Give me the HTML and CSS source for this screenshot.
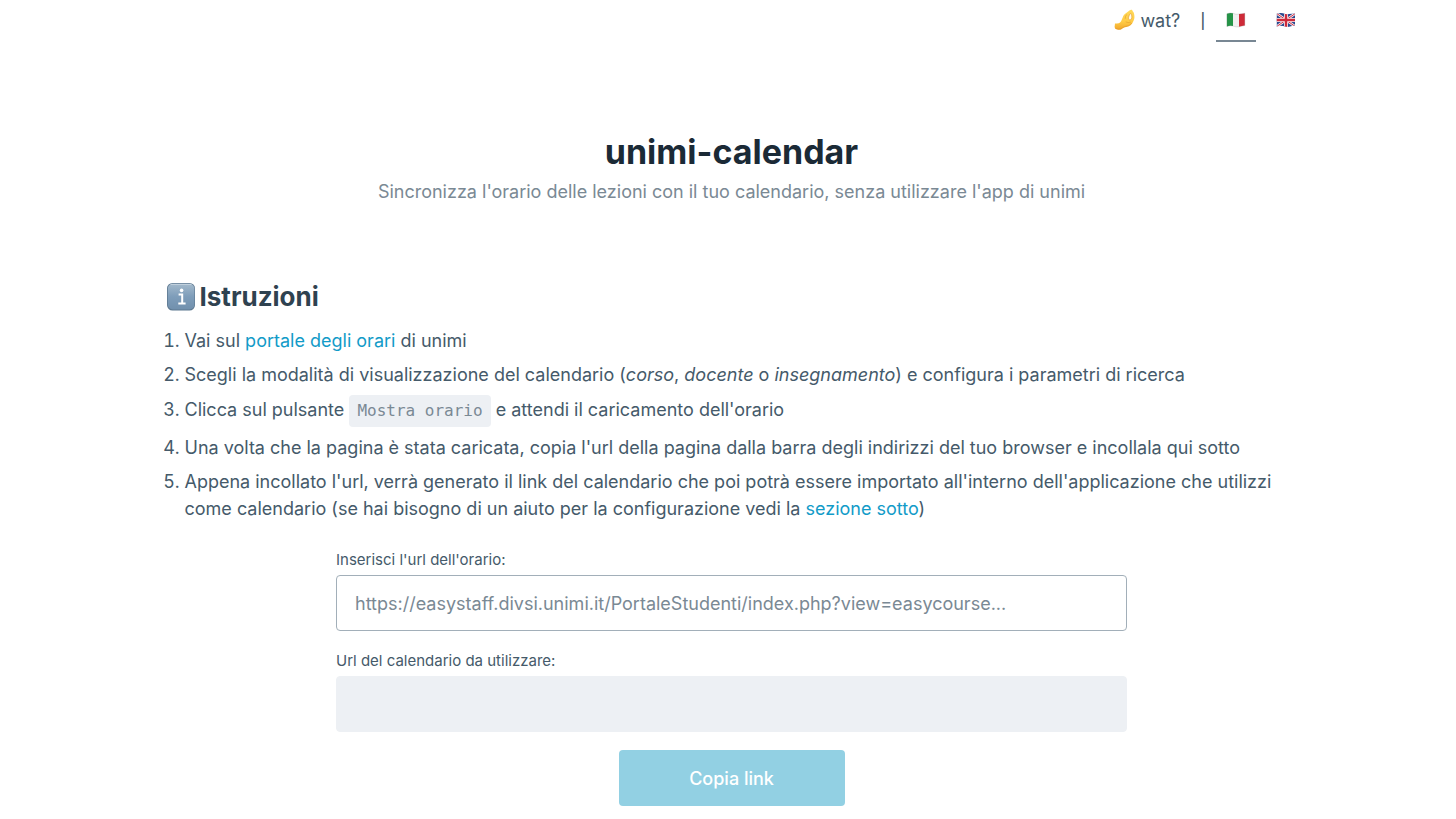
FILE: index.html
```html
<!DOCTYPE html>
<html lang="it">
<head>
<meta charset="utf-8">
<meta name="viewport" content="width=device-width, initial-scale=1">
<title>unimi-calendar</title>
<link rel="stylesheet" href="styles.css">
</head>
<body>
<div class="container">
  <nav class="nav">
    <a class="nav-link" href="#wat">
      <svg class="hand" viewBox="0 0 22 22" aria-hidden="true">
        <defs><linearGradient id="skin" x1="0" y1="0" x2="0" y2="1"><stop offset="0" stop-color="#ffd95a"/><stop offset=".6" stop-color="#ffcb45"/><stop offset="1" stop-color="#f0a52b"/></linearGradient></defs>
        <path d="M1 14.6C3.6 14.6 6 14.2 7.1 12.2L8.8 8.2C9.3 6.6 10.4 5.4 11.9 4.3L15.8 1.3C16.8.5 18.3.6 18.5 1.9C19.9 3 20.3 5 20.4 7.2C20.6 9.4 20 10.8 19.2 12.6C18.2 15.6 15.6 17.6 12.4 18C10.2 18.3 9 18.8 7.8 20C6.6 21 5 21 3.2 20.6Q.6 20.2 .6 18Z" fill="url(#skin)"/>
        <path d="M16.7 4.4C15.2 5.7 14.2 8 14.6 9.8C15 11.4 16.6 11.4 17.4 9.8C18.2 8.2 18 5.8 16.7 4.4Z" fill="#fffaf0" stroke="#e2a23a" stroke-width=".7"/>
        <path d="M12.4 5.8Q11 7.6 11.2 9.4M12 13Q14 14.2 16.6 13.2M2 19.6Q5 20.8 7.3 19.4L10.6 17.6Q15 17.4 17.6 14.6" fill="none" stroke="#e09a2c" stroke-width=".6" stroke-linecap="round"/>
      </svg>
      <span>wat?</span>
    </a>
    <span class="divider">|</span>
    <a class="nav-link flag-link active" href="#it" aria-label="Italiano" aria-current="page">
      <svg class="flag" viewBox="0 0 20 16" aria-hidden="true">
        <path d="M.9 1.8Q4 .4 7 1.3V14.1Q4 13.2.9 14.4Z" fill="#249447"/>
        <path d="M7 1.3Q10 2.8 13 2.1V14.8Q10 15.2 7 14.1Z" fill="#f0f0f0"/>
        <path d="M13 2.1Q16 1.5 18.8 1.2V13.5Q16 14.1 13 14.8Z" fill="#ce2a38"/>
        <path d="M.9 1.8Q4 .4 7 1.3Q10 2.8 13 2.1Q16 1.5 18.8 1.2V13.5Q16 14.1 13 14.8Q10 15.2 7 14.1Q4 13.2.9 14.4Z" fill="none" stroke="#777" stroke-opacity=".35" stroke-width=".6"/>
      </svg>
    </a>
    <a class="nav-link flag-link" href="#en" aria-label="English">
      <svg class="flag" viewBox="0 0 20 16" aria-hidden="true">
        <defs><clipPath id="wave"><path d="M.8 1.8Q4 .4 7 1.3Q10 2.8 13 2.1Q16 1.5 19 1.4V13.6Q16 14.1 13 14.8Q10 15.2 7 14.1Q4 13.2.8 14.4Z"/></clipPath></defs>
        <g clip-path="url(#wave)">
          <path d="M0 0H20V16H0Z" fill="#29498f"/>
          <path d="M0 1L20 15M20 1L0 15" stroke="#f4e9ed" stroke-width="2.6"/>
          <path d="M0 1L20 15M20 1L0 15" stroke="#cf3545" stroke-width="1"/>
          <path d="M10 0V16M0 8H20" stroke="#f6eef0" stroke-width="4"/>
          <path d="M10 0V16M0 8H20" stroke="#ce2b3c" stroke-width="2.4"/>
        </g>
      </svg>
    </a>
  </nav>

  <header class="hero">
    <h1 class="title">unimi-calendar</h1>
    <p class="subtitle">Sincronizza l'orario delle lezioni con il tuo calendario, senza utilizzare l'app di unimi</p>
  </header>

  <main>
    <h2 class="section-title">
      <svg class="info" viewBox="0 0 30 30" aria-hidden="true">
        <defs><linearGradient id="tile" x1="0" y1="0" x2="0" y2="1"><stop offset="0" stop-color="#a3b9cb"/><stop offset=".5" stop-color="#7e9dba"/><stop offset="1" stop-color="#7190ad"/></linearGradient></defs>
        <rect x="1" y="1" width="28" height="27.6" rx="5.5" fill="#5d7890"/>
        <rect x="1.8" y="1.8" width="26.6" height="25.6" rx="5" fill="url(#tile)"/>
        <path d="M5 2.4H25" stroke="#c4d3df" stroke-width="1" stroke-linecap="round"/>
        <circle cx="15.6" cy="8.4" r="1.8" fill="#fff"/>
        <path d="M12.6 12.6H16.2V21.3M12.3 21.6H19.6" fill="none" stroke="#fff" stroke-width="2"/>
      </svg>
      <span>Istruzioni</span>
    </h2>
    <ol class="steps">
      <li>Vai sul <a href="#portale">portale degli orari</a> di unimi</li>
      <li>Scegli la modalità di visualizzazione del calendario (<em>corso</em>, <em>docente</em> o <em>insegnamento</em>) e configura i parametri di ricerca</li>
      <li>Clicca sul pulsante <code>Mostra orario</code> e attendi il caricamento dell'orario</li>
      <li>Una volta che la pagina è stata caricata, copia l'url della pagina dalla barra degli indirizzi del tuo browser e incollala qui sotto</li>
      <li>Appena incollato l'url, verrà generato il link del calendario che poi potrà essere importato all'interno dell'applicazione che utilizzi come calendario (se hai bisogno di un aiuto per la configurazione vedi la <a href="#sezione">sezione sotto</a>)</li>
    </ol>

    <form class="form">
      <label for="source">Inserisci l'url dell'orario:</label>
      <input id="source" type="text" placeholder="https://easystaff.divsi.unimi.it/PortaleStudenti/index.php?view=easycourse...">
      <label for="result">Url del calendario da utilizzare:</label>
      <input id="result" class="result" type="text" readonly>
      <button class="copy" type="button" disabled>Copia link</button>
    </form>
  </main>
</div>
</body>
</html>
```
FILE: styles.css
```css
* {
  box-sizing: border-box;
}

body {
  margin: 0;
  padding-left: 7px;
  background: #fff;
  color: #455a6a;
  font-family: Inter, "Liberation Sans", sans-serif;
  font-size: 18px;
  line-height: 27px;
}

.container {
  width: 100%;
  max-width: 1130px;
  margin: 0 auto;
}

a {
  color: #129bc8;
  text-decoration: none;
}

.nav {
  display: flex;
  justify-content: flex-end;
  align-items: flex-start;
  gap: 10px;
  margin-right: -9px;
}

.nav-link {
  display: flex;
  align-items: center;
  gap: 4px;
  height: 42px;
  padding: 0 10px;
  border-bottom: 2px solid transparent;
  color: #455a6a;
}

.nav-link.active {
  border-color: #788793;
}

.flag-link {
  width: 40px;
}

.hand {
  width: 22px;
  height: 22px;
}

.flag {
  width: 20px;
  height: 16px;
}

.divider {
  font-size: 15px;
  font-weight: 500;
  line-height: 42px;
}

.hero {
  padding: 87px 0 74px;
  text-align: center;
}

.title {
  margin: 0 0 4px;
  color: #1b2a36;
  font-size: 34px;
  line-height: 45px;
  font-weight: 700;
}

.subtitle {
  margin: 0;
  color: #7a8994;
}

.section-title {
  display: flex;
  align-items: center;
  gap: 4px;
  margin: 0 0 12px;
  color: #2f4250;
  font-size: 26px;
  line-height: 36px;
  font-weight: 700;
}

.info {
  width: 30px;
  height: 30px;
  margin-left: -1px;
}

.steps {
  margin: 0 0 26px;
  padding-left: 18px;
}

.steps li {
  margin-bottom: 7px;
}

code {
  display: inline-block;
  padding: 6px 8px;
  border-radius: 4px;
  background: #edf0f4;
  color: #7a8994;
  font-family: "DejaVu Sans Mono", monospace;
  font-size: 16px;
  line-height: 20px;
}

.form {
  display: flex;
  flex-direction: column;
  width: 70%;
  margin: 0 auto;
}

label {
  margin-bottom: 3px;
  font-size: 15px;
  line-height: 24px;
}

input {
  width: 100%;
  height: 56px;
  margin: 0 0 18px;
  padding: 0 18px;
  border: 1px solid #a2afb9;
  border-radius: 4px;
  background: #fff;
  color: #455a6a;
  font: inherit;
}

input::placeholder {
  color: #7a8994;
  opacity: 1;
}

.result {
  border-color: #edf0f4;
  background: #edf0f4;
}

.copy {
  align-self: center;
  width: 226px;
  height: 56px;
  margin-bottom: 12px;
  border: 0;
  border-radius: 4px;
  background: #92d0e3;
  color: #fff;
  font: inherit;
  font-weight: 500;
}
```
